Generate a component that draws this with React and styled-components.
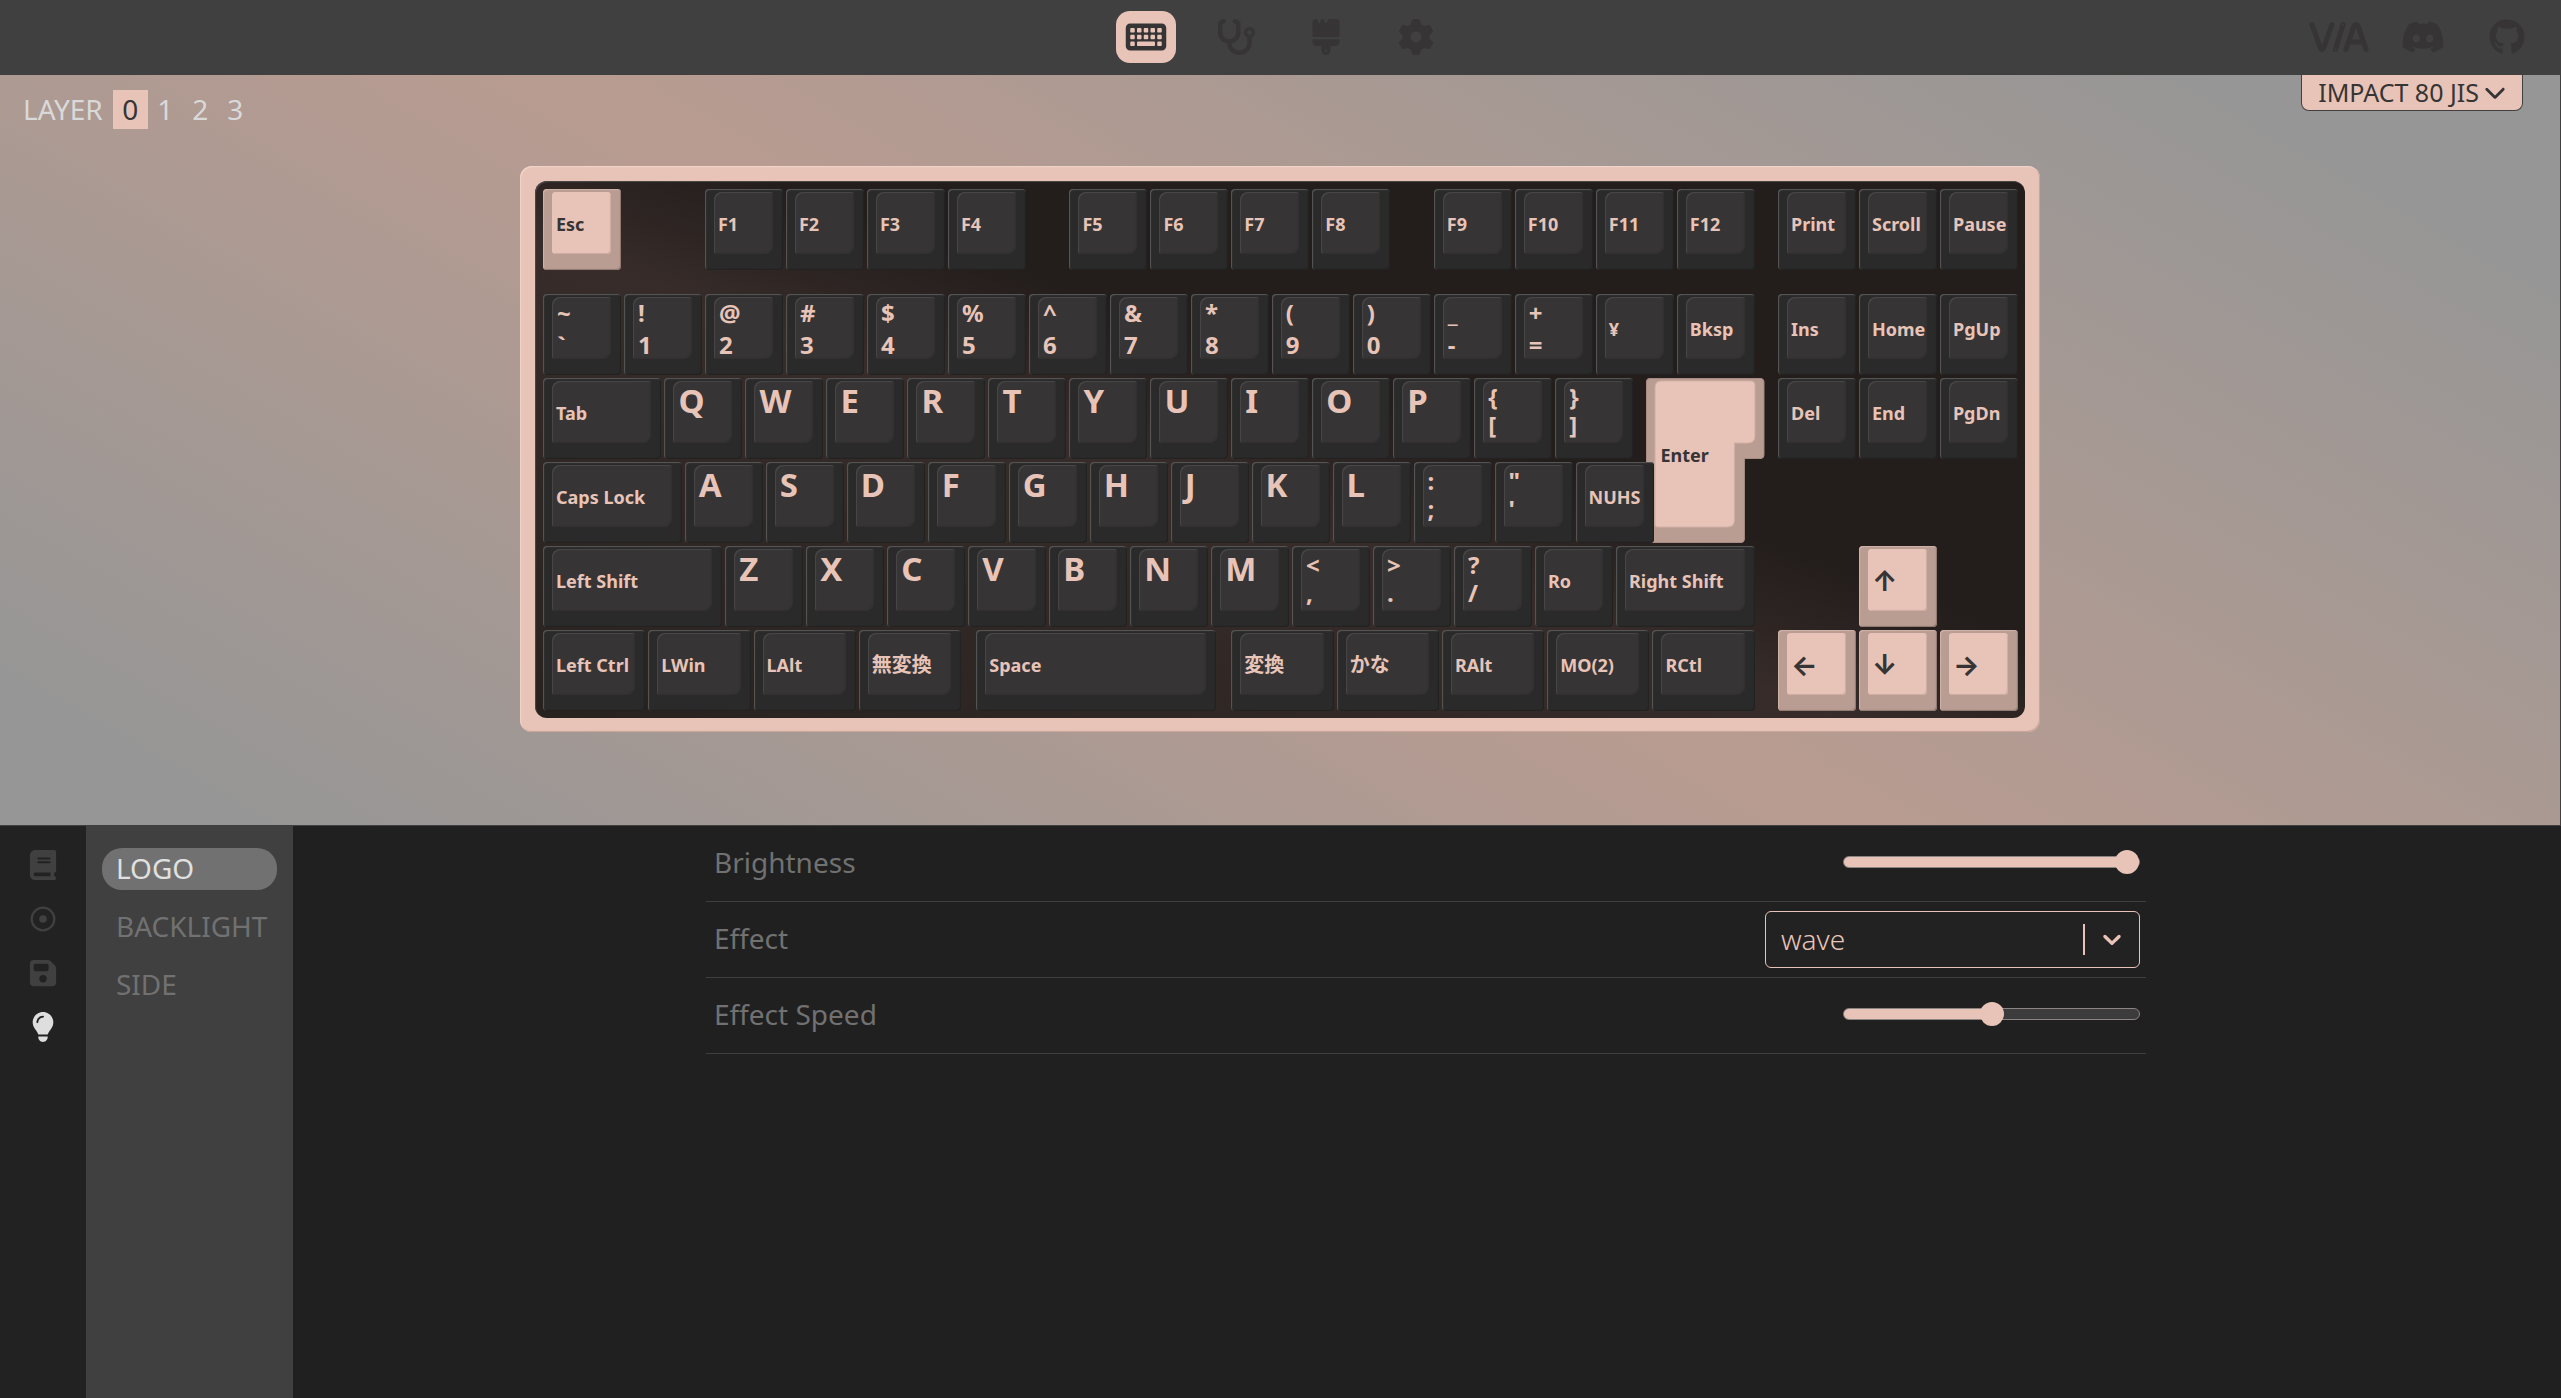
import { useState } from 'react';
import styled, { createGlobalStyle, css } from 'styled-components';
import {
    FaBook,
    FaBrush,
    FaChevronDown,
    FaDiscord,
    FaFloppyDisk,
    FaGear,
    FaGithub,
    FaKeyboard,
    FaLightbulb,
    FaStethoscope,
} from 'react-icons/fa6';

const UNITS = 18.25;

// c: label, w: width in key units, two legends when c is an array, gap: empty space
const rows = [
    [
        { c: 'Esc', accent: true },
        { gap: 1 },
        ...['F1', 'F2', 'F3', 'F4'].map((c) => ({ c })),
        { gap: 0.5 },
        ...['F5', 'F6', 'F7', 'F8'].map((c) => ({ c })),
        { gap: 0.5 },
        ...['F9', 'F10', 'F11', 'F12'].map((c) => ({ c })),
        { gap: 0.25 },
        ...['Print', 'Scroll', 'Pause'].map((c) => ({ c })),
    ],
    [
        ...['~`', '!1', '@2', '#3', '$4', '%5', '^6', '&7', '*8', '(9', ')0', '_-', '+='].map((c) => ({
            c: c.split(''),
            wide: true,
        })),
        { c: '¥' },
        { c: 'Bksp' },
        { gap: 0.25 },
        ...['Ins', 'Home', 'PgUp'].map((c) => ({ c })),
    ],
    [
        { c: 'Tab', w: 1.5 },
        ...'QWERTYUIOP'.split('').map((c) => ({ c, letter: true })),
        { c: ['{', '['] },
        { c: ['}', ']'] },
        { gap: 0.125 },
        { c: 'Enter', w: 1.5, enter: true },
        { gap: 0.125 },
        ...['Del', 'End', 'PgDn'].map((c) => ({ c })),
    ],
    [
        { c: 'Caps Lock', w: 1.75 },
        ...'ASDFGHJKL'.split('').map((c) => ({ c, letter: true })),
        { c: [':', ';'] },
        { c: ['"', "'"] },
        { c: 'NUHS' },
    ],
    [
        { c: 'Left Shift', w: 2.25 },
        ...'ZXCVBNM'.split('').map((c) => ({ c, letter: true })),
        { c: ['<', ','] },
        { c: ['>', '.'] },
        { c: ['?', '/'] },
        { c: 'Ro' },
        { c: 'Right Shift', w: 1.75 },
        { gap: 1.25 },
        { c: '↑', accent: true, arrow: true },
    ],
    [
        { c: 'Left Ctrl', w: 1.3 },
        { c: 'LWin', w: 1.3 },
        { c: 'LAlt', w: 1.3 },
        { c: '無変換', w: 1.3, kana: true },
        { gap: 0.15 },
        { c: 'Space', w: 3 },
        { gap: 0.15 },
        { c: '変換', w: 1.3, kana: true },
        { c: 'かな', w: 1.3, kana: true },
        { c: 'RAlt', w: 1.3 },
        { c: 'MO(2)', w: 1.3 },
        { c: 'RCtl', w: 1.3 },
        { gap: 0.25 },
        { c: '←', accent: true, arrow: true },
        { c: '↓', accent: true, arrow: true },
        { c: '→', accent: true, arrow: true },
    ],
];

const ViaLogo = () => (
    <StyledViaLogo viewBox="0 0 60 32" fill="none" stroke="currentColor" strokeLinecap="round">
        <path d="M3 3.5 11 26q2 5 4 0L23 3.5" strokeWidth="5" />
        <path d="M34 3.5 26.5 28.5" strokeWidth="5" />
        <path d="M37 28.5 44.5 6q2.500-5 5 0L57 28.500M42 21h10" strokeWidth="5" />
        <circle cx="34" cy="3.5" r="1" stroke="none" fill="#404040" />
        <circle cx="26.500" cy="28.500" r="1" stroke="none" fill="#404040" />
    </StyledViaLogo>
);

const MacroIcon = () => (
    <svg width="26" height="26" viewBox="0 0 26 26">
        <circle cx="13" cy="13" r="11.300" fill="none" stroke="currentColor" strokeWidth="2.300" />
        <circle cx="13" cy="13" r="3.800" fill="currentColor" />
    </svg>
);

const EnterShape = () => (
    <StyledEnterShape viewBox="0 0 118 165" preserveAspectRatio="none" aria-hidden="true">
        <path
            d="M4 .5H114a3.500 3.500 0 0 1 3.500 3.500V77a3.500 3.500 0 0 1-3.500 3.500H98V161a3.500 3.500 0 0 1-3.500 3.500H4A3.500 3.500 0 0 1 .5 161V4A3.500 3.500 0 0 1 4 .5Z"
            fill="#b99d93"
            stroke="#a88c83"
        />
        <path
            d="M15 3H104q4.500 0 4.500 4V58q0 7-7 7H88V142q0 7-7 7H12q-3 0-3-3V10q0-7 6-7Z"
            fill="#e8c4b8"
            stroke="#d3b0a5"
            strokeWidth="1"
        />
    </StyledEnterShape>
);

const Key = ({ item }) => {
    if (item.gap) return <Slot $w={item.gap} />;
    const { c, w = 1, accent, letter, kana, arrow, wide, enter } = item;
    if (enter) {
        return (
            <Slot $w={w}>
                <EnterKey type="button">
                    <EnterShape />
                    <EnterLabel>{c}</EnterLabel>
                </EnterKey>
            </Slot>
        );
    }
    return (
        <Slot $w={w}>
            <KeyBase type="button" $accent={accent}>
                {Array.isArray(c) ? (
                    <DualCap $wide={wide}>
                        <span>{c[0]}</span>
                        <span>{c[1]}</span>
                    </DualCap>
                ) : letter ? (
                    <LetterCap>{c}</LetterCap>
                ) : (
                    <Cap $accent={accent} $kana={kana} $arrow={arrow}>
                        {c}
                    </Cap>
                )}
            </KeyBase>
        </Slot>
    );
};

const App = () => {
    const [layer, setLayer] = useState(0);
    const [section, setSection] = useState('LOGO');
    const [brightness, setBrightness] = useState(100);
    const [speed, setSpeed] = useState(50);

    return (
        <Page>
            <GlobalStyle />
            <TopBar>
                <span />
                <Tabs>
                    <TabLink href="#configure" aria-label="Configure" $active>
                        <FaKeyboard />
                    </TabLink>
                    <TabLink href="#test" aria-label="Key tester">
                        <FaStethoscope />
                    </TabLink>
                    <TabLink href="#design" aria-label="Design">
                        <FaBrush />
                    </TabLink>
                    <TabLink href="#settings" aria-label="Settings">
                        <FaGear />
                    </TabLink>
                </Tabs>
                <ExternalLinks>
                    <a href="#via" aria-label="VIA">
                        <ViaLogo />
                    </a>
                    <a href="#discord" aria-label="Discord">
                        <FaDiscord />
                    </a>
                    <a href="#github" aria-label="GitHub">
                        <FaGithub />
                    </a>
                </ExternalLinks>
            </TopBar>

            <Canvas>
                <CanvasHeader>
                    <Layers>
                        <LayerLabel>LAYER</LayerLabel>
                        {[0, 1, 2, 3].map((n) => (
                            <LayerButton key={n} type="button" $active={n === layer} onClick={() => setLayer(n)}>
                                {n}
                            </LayerButton>
                        ))}
                    </Layers>
                    <Badge type="button">
                        IMPACT 80 JIS
                        <FaChevronDown />
                    </Badge>
                </CanvasHeader>
                <Case>
                    <Plate>
                        {rows.map((row, i) => (
                            <KeyRow key={i}>
                                {row.map((item, j) => (
                                    <Key key={j} item={item} />
                                ))}
                            </KeyRow>
                        ))}
                    </Plate>
                </Case>
            </Canvas>

            <Bottom>
                <Rail>
                    <RailButton type="button" aria-label="Keymap">
                        <FaBook />
                    </RailButton>
                    <RailButton type="button" aria-label="Macros">
                        <MacroIcon />
                    </RailButton>
                    <RailButton type="button" aria-label="Save and load">
                        <FaFloppyDisk />
                    </RailButton>
                    <RailButton type="button" aria-label="Lighting" $active>
                        <FaLightbulb />
                    </RailButton>
                </Rail>
                <Submenu>
                    {['LOGO', 'BACKLIGHT', 'SIDE'].map((name) => (
                        <SubmenuButton
                            key={name}
                            type="button"
                            $active={name === section}
                            onClick={() => setSection(name)}
                        >
                            {name}
                        </SubmenuButton>
                    ))}
                </Submenu>
                <Content>
                    <Controls>
                        <ControlRow>
                            <ControlLabel htmlFor="brightness">Brightness</ControlLabel>
                            <Range
                                id="brightness"
                                type="range"
                                value={brightness}
                                onChange={(e) => setBrightness(e.target.value)}
                                style={{ '--fill': `${brightness}%` }}
                            />
                        </ControlRow>
                        <ControlRow>
                            <ControlLabel htmlFor="effect">Effect</ControlLabel>
                            <SelectBox>
                                <Select id="effect" defaultValue="wave">
                                    <option value="wave">wave</option>
                                </Select>
                                <SelectIndicator>
                                    <svg width="30" height="30" viewBox="0 0 20 20" fill="currentColor">
                                        <path d="M4.516 7.548c0.436-0.446 1.043-0.481 1.576 0l3.908 3.747 3.908-3.747c0.533-0.481 1.141-0.446 1.574 0 0.436 0.445 0.408 1.197 0 1.615-0.406 0.418-4.695 4.502-4.695 4.502-0.217 0.223-0.502 0.335-0.787 0.335s-0.570-0.112-0.789-0.335c0 0-4.287-4.084-4.695-4.502s-0.436-1.170 0-1.615z" />
                                    </svg>
                                </SelectIndicator>
                            </SelectBox>
                        </ControlRow>
                        <ControlRow>
                            <ControlLabel htmlFor="speed">Effect Speed</ControlLabel>
                            <Range
                                id="speed"
                                type="range"
                                value={speed}
                                onChange={(e) => setSpeed(e.target.value)}
                                style={{ '--fill': `${speed}%` }}
                            />
                        </ControlRow>
                    </Controls>
                </Content>
            </Bottom>
        </Page>
    );
};

export default App;

const GlobalStyle = createGlobalStyle`
    *, *::before, *::after {
        box-sizing: border-box;
    }
    body {
        margin: 0;
        background: #202020;
        font-family: 'Noto Sans', 'Noto Sans CJK JP', sans-serif;
        font-size: 28px;
    }
    button, select {
        font: inherit;
        color: inherit;
        background: none;
        border: 0;
        padding: 0;
        cursor: pointer;
    }
    svg {
        display: block;
        flex: none;
    }
`;

const Page = styled.div`
    display: flex;
    flex-direction: column;
    min-height: 100vh;
`;

const TopBar = styled.header`
    display: grid;
    grid-template-columns: 1fr auto 1fr;
    align-items: center;
    height: 75px;
    padding-bottom: 2px;
    background: #404040;
`;

const Tabs = styled.nav`
    display: flex;
    gap: 30px;
`;

const TabLink = styled.a`
    display: flex;
    align-items: center;
    justify-content: center;
    width: 60px;
    height: 52px;
    border-radius: 14px;
    color: #363434;
    background: ${(props) => (props.$active ? '#e8c4b8' : 'none')};

    svg {
        width: 42px;
        height: 36px;
    }
`;

const ExternalLinks = styled.nav`
    display: flex;
    align-items: center;
    justify-content: flex-end;
    gap: 40px;
    padding-right: 32px;

    a {
        display: flex;
        justify-content: center;
        width: 44px;
        color: #363434;
    }
    svg {
        width: 44px;
        height: 36px;
    }
`;

const StyledViaLogo = styled.svg`
    && {
        width: 60px;
        height: 32px;
    }
`;

const Canvas = styled.main`
    display: flex;
    flex-direction: column;
    align-items: center;
    gap: 36px;
    padding-bottom: 93px;
    border-right: 1px solid #404040;
    border-bottom: 1px solid #404040;
    background: linear-gradient(30deg, #969696 6%, #b99c91 48%, #969696 91%);
`;

const CanvasHeader = styled.div`
    display: flex;
    align-items: flex-start;
    justify-content: space-between;
    align-self: stretch;
    height: 55px;
    padding: 0 37px 0 23px;
`;

const Layers = styled.div`
    display: flex;
    align-items: center;
    padding-top: 15px;
    color: #d9d9d9;
    line-height: 39px;
`;

const LayerLabel = styled.span`
    margin-right: 10px;
`;

const LayerButton = styled.button`
    width: 35px;
    height: 39px;
    color: ${(props) => (props.$active ? '#363434' : '#d9d9d9')};
    background: ${(props) => (props.$active ? '#e8c4b8' : 'none')};
`;

const Badge = styled.button`
    display: flex;
    align-items: center;
    gap: 5px;
    height: 36px;
    padding: 0 16px 2px;
    border: 1px solid #404040;
    border-top: 0;
    border-radius: 0 0 8px 8px;
    background: #e8c4b8;
    color: #363434;
    font-size: 25px;

    svg {
        width: 22px;
        height: 22px;
    }
`;

const Case = styled.section`
    width: 100%;
    max-width: 1520px;
    padding: 15px 15px 14px;
    border-radius: 12px;
    background: #e8c4b8;
    box-shadow: inset 1px 1px 1px #f1d6cc, inset -1px -1px 1px #c7a398;
`;

const Plate = styled.div`
    display: flex;
    flex-direction: column;
    gap: 3px;
    padding: 8px 8px 7px;
    border-radius: 12px;
    background: linear-gradient(20deg, #28221f 0%, #372c2a 44%, #231d1b 58%);
    box-shadow: inset 1px 1px 1px #4d4a4a;
`;

const KeyRow = styled.div`
    display: flex;
    height: 81px;
    margin-right: -4px;

    &:first-child {
        margin-bottom: 21px;
    }
`;

const Slot = styled.div`
    flex: none;
    width: calc(100% * ${(props) => props.$w} / ${UNITS});
    padding-right: 3px;
`;

const KeyBase = styled.button`
    display: flex;
    width: 100%;
    height: 81px;
    padding: 3px 10px 16px 9px;
    border-radius: 4px;
    ${(props) =>
        props.$accent
            ? css`
                  background: #b99d93;
                  box-shadow: inset 1px 1px 1px #d0b3a9, inset -1px -1px 1px #8f7870;
              `
            : css`
                  background: #2a2a2a;
                  box-shadow: inset 1px 1px 1px #595959, inset -1px -1px 1px #222;
              `}
`;

const capSurface = css`
    flex: 1;
    align-self: stretch;
    border-radius: 8px 3px 8px 3px;
    background: #363434;
    box-shadow: inset 1px 1px 1px #4a4848, inset -1px -1px 1px #323030;
    color: #e8c4b8;
    font-weight: 700;
    text-align: left;
    white-space: nowrap;
`;

const Cap = styled.span`
    ${capSurface}
    display: flex;
    align-items: center;
    padding: 2px 0 0 4px;
    font-size: ${(props) => (props.$kana ? 20 : 18)}px;
    line-height: 24px;
    ${(props) =>
        props.$accent &&
        css`
            border-radius: 4px;
            background: #e8c4b8;
            box-shadow: inset 1px 1px 1px #e8c4b8, inset -1px -1px 1px #cfaca1;
            color: #363434;
        `}
    ${(props) =>
        props.$arrow &&
        css`
            font-family: 'Inter', sans-serif;
            font-size: 28px;
        `}
`;

const LetterCap = styled.span`
    ${capSurface}
    padding: 3px 0 0 5px;
    font-size: 33px;
    line-height: 34px;
`;

const DualCap = styled.span`
    ${capSurface}
    display: flex;
    flex-direction: column;
    padding: ${(props) => (props.$wide ? 0 : 2)}px 0 0 5px;
    font-size: 24px;
    line-height: ${(props) => (props.$wide ? 32 : 28)}px;
`;

// The enter key spans two rows, both layers share one grid cell
const EnterKey = styled.button`
    display: grid;
    width: 100%;
    height: 165px;
`;

const StyledEnterShape = styled.svg`
    grid-area: 1 / 1;
    width: 100%;
    height: 100%;
`;

const EnterLabel = styled.span`
    grid-area: 1 / 1;
    align-self: center;
    justify-self: start;
    padding: 0 0 12px 14px;
    color: #363434;
    font-size: 18px;
    font-weight: 700;
`;

const Bottom = styled.div`
    display: flex;
    flex: 1;
`;

const Rail = styled.nav`
    display: flex;
    flex-direction: column;
    align-items: center;
    gap: 24px;
    width: 86px;
    padding-top: 24px;
    background: #222;
`;

const RailButton = styled.button`
    display: flex;
    align-items: center;
    justify-content: center;
    width: 30px;
    height: 30px;
    color: ${(props) => (props.$active ? '#dedede' : '#404040')};
    font-size: 30px;
`;

const Submenu = styled.nav`
    display: flex;
    flex-direction: column;
    gap: 16px;
    width: 207px;
    padding: 22px 16px;
    background: #404040;
`;

const SubmenuButton = styled.button`
    height: 42px;
    padding: 0 0 2px 14px;
    border-radius: 20px;
    line-height: 40px;
    text-align: left;
    color: ${(props) => (props.$active ? '#e0e0e0' : '#717171')};
    background: ${(props) => (props.$active ? '#717171' : 'none')};
`;

const Content = styled.section`
    display: flex;
    flex: 1;
    align-items: flex-start;
    justify-content: center;
    padding-right: 2px;
    background: #202020;
`;

const Controls = styled.div`
    width: 100%;
    max-width: 1440px;
`;

const ControlRow = styled.div`
    display: flex;
    align-items: center;
    justify-content: space-between;
    height: 76px;
    padding: 0 6px 0 8px;
    border-bottom: 1px solid #404040;
    color: #717171;
`;

const ControlLabel = styled.label`
    padding-bottom: 4px;
`;

const thumb = css`
    width: 24px;
    height: 24px;
    border: 0;
    border-radius: 50%;
    background: #e8c4b8;
`;

const Range = styled.input`
    appearance: none;
    width: 297px;
    height: 12px;
    margin: 0 0 4px;
    border: 1px solid #8a8482;
    border-radius: 6px;
    background: linear-gradient(to right, #e8c4b8 var(--fill), #3c3c3c var(--fill));
    cursor: pointer;

    &::-webkit-slider-thumb {
        appearance: none;
        ${thumb}
    }
    &::-moz-range-thumb {
        ${thumb}
    }
`;

const SelectBox = styled.div`
    display: grid;
    width: 375px;
    height: 57px;
    color: #e8c4b8;
`;

const Select = styled.select`
    grid-area: 1 / 1;
    appearance: none;
    padding: 0 72px 2px 15px;
    border: 1px solid #e8c4b8;
    border-radius: 6px;
    background: #222;
    font-weight: 300;
`;

const SelectIndicator = styled.span`
    grid-area: 1 / 1;
    align-self: center;
    justify-self: end;
    height: 31px;
    margin-right: 13px;
    padding-left: 12px;
    border-left: 2px solid #e8c4b8;
    pointer-events: none;
`;
